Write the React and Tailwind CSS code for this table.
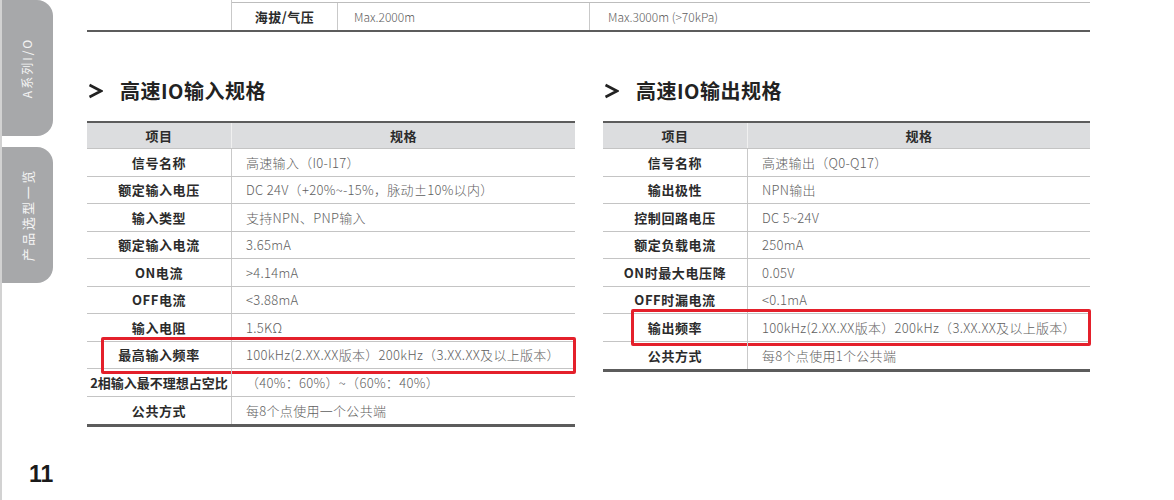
const inputRows = [
  ["信号名称", "高速输入（I0-I17）"],
  ["额定输入电压", "DC 24V（+20%~-15%，脉动±10%以内）"],
  ["输入类型", "支持NPN、PNP输入"],
  ["额定输入电流", "3.65mA"],
  ["ON电流", ">4.14mA"],
  ["OFF电流", "<3.88mA"],
  ["输入电阻", "1.5KΩ"],
  ["最高输入频率", "100kHz(2.XX.XX版本）200kHz（3.XX.XX及以上版本）", "left"],
  ["2相输入最不理想占空比", "（40%：60%）~（60%：40%）"],
  ["公共方式", "每8个点使用一个公共端"],
];

const outputRows = [
  ["信号名称", "高速输出（Q0-Q17）"],
  ["输出极性", "NPN输出"],
  ["控制回路电压", "DC 5~24V"],
  ["额定负载电流", "250mA"],
  ["ON时最大电压降", "0.05V"],
  ["OFF时漏电流", "<0.1mA"],
  ["输出频率", "100kHz(2.XX.XX版本）200kHz（3.XX.XX及以上版本）", "right"],
  ["公共方式", "每8个点使用1个公共端"],
];

const Chevron = () => (
  <svg width="15" height="16" viewBox="0 0 15 16" className="shrink-0">
    <polyline points="1.5,2 13,8 1.5,14" fill="none" stroke="#222" strokeWidth="2.6" strokeLinejoin="miter" />
  </svg>
);

const Heading = ({ title }) => (
  <div className="flex items-center h-[22px]">
    <div className="w-[33px] pl-[1px]">
      <Chevron />
    </div>
    <h2 className="text-[20px] font-bold text-[#222] leading-none tracking-[0.5px]">{title}</h2>
  </div>
);

const SpecTable = ({ rows }) => (
  <div className="border-t-2 border-b-[3px] border-[#5c5c5c]">
    <div className="flex h-[26px] bg-[#dcdddf] border-b border-[#c4c4c4] text-[13px] font-bold text-[#2b2b2b] tracking-[0.5px]">
      <div className="w-[145px] flex items-center justify-center border-r border-[#f0f0f0]">项目</div>
      <div className="flex-1 flex items-center justify-center">规格</div>
    </div>
    {rows.map(([name, value, mark], i) => (
      <div
        key={name}
        className={`relative flex h-[27.5px] text-[13px] ${
          i < rows.length - 1 ? "border-b border-[#c4c4c4]" : ""
        }`}
      >
        <div
          className={`w-[145px] flex items-center justify-center border-r border-[#c9c9c9] font-bold text-[#2b2b2b] whitespace-nowrap ${
            name.length > 8 ? "tracking-normal" : "tracking-[0.6px]"
          }`}
        >
          {name}
        </div>
        <div className="flex-1 flex items-center pl-[14px] font-light text-[#5e5e5e] whitespace-nowrap tracking-[0.3px]">
          {value}
        </div>
        {mark === "left" && (
          <div className="absolute left-[14px] -right-[1px] -top-[5px] -bottom-[6px] border-[3px] border-[#e4202b] rounded-[2px]" />
        )}
        {mark === "right" && (
          <div className="absolute left-[28px] -right-[1px] -top-[5px] -bottom-[5px] border-[3px] border-[#e4202b] rounded-[2px]" />
        )}
      </div>
    ))}
  </div>
);

export default function App() {
  return (
    <div className="w-[1174px] h-[500px] flex bg-white overflow-hidden font-['Noto_Sans_CJK_SC','Noto_Sans',sans-serif]">
      {/* side tabs */}
      <div className="w-[87px] shrink-0 flex flex-col border-l-2 border-[#d2d2d2]">
        <div className="w-[51px] h-[136px] bg-[#a7a8aa] rounded-r-[16px] flex items-center justify-center">
          <span className="-rotate-90 whitespace-nowrap text-[12px] tracking-[2px] text-[#f4f4f4]">A系列I/O</span>
        </div>
        <div className="w-[51px] h-[136px] mt-[11px] bg-[#a7a8aa] rounded-r-[16px] flex items-center justify-center">
          <span className="-rotate-90 whitespace-nowrap text-[13px] tracking-[2.5px] text-[#f4f4f4]">产品选型一览</span>
        </div>
        <div className="mt-auto mb-[14px] pl-[27px] font-['Liberation_Sans',sans-serif] font-bold text-[23px] leading-none text-[#1a1a1a]">
          11
        </div>
      </div>

      {/* main */}
      <div className="w-[1003px] flex flex-col">
        <div className="flex h-[32px] border-b-2 border-[#5c5c5c]">
          <div className="w-[145px] border-r border-[#c9c9c9]" />
          <div className="flex-1 flex flex-col">
            <div className="h-[3px] border-b border-[#bdbdbd]" />
            <div className="flex flex-1 text-[12px]">
              <div className="w-[106px] flex items-center justify-center border-r border-[#c9c9c9] font-bold text-[13px] text-[#2b2b2b] tracking-[0.5px]">
                海拔/气压
              </div>
              <div className="w-[252px] flex items-center pl-[16px] border-r border-[#c9c9c9] font-light text-[#5e5e5e]">
                Max.2000m
              </div>
              <div className="flex-1 flex items-center pl-[18px] font-light text-[#5e5e5e]">Max.3000m (&gt;70kPa)</div>
            </div>
          </div>
        </div>

        <div className="flex gap-[28px] mt-[48px]">
          <div className="w-[488px] flex flex-col">
            <Heading title="高速IO输入规格" />
            <div className="mt-[19px]">
              <SpecTable rows={inputRows} />
            </div>
          </div>
          <div className="w-[487px] flex flex-col">
            <Heading title="高速IO输出规格" />
            <div className="mt-[19px]">
              <SpecTable rows={outputRows} />
            </div>
          </div>
        </div>
      </div>
    </div>
  );
}
